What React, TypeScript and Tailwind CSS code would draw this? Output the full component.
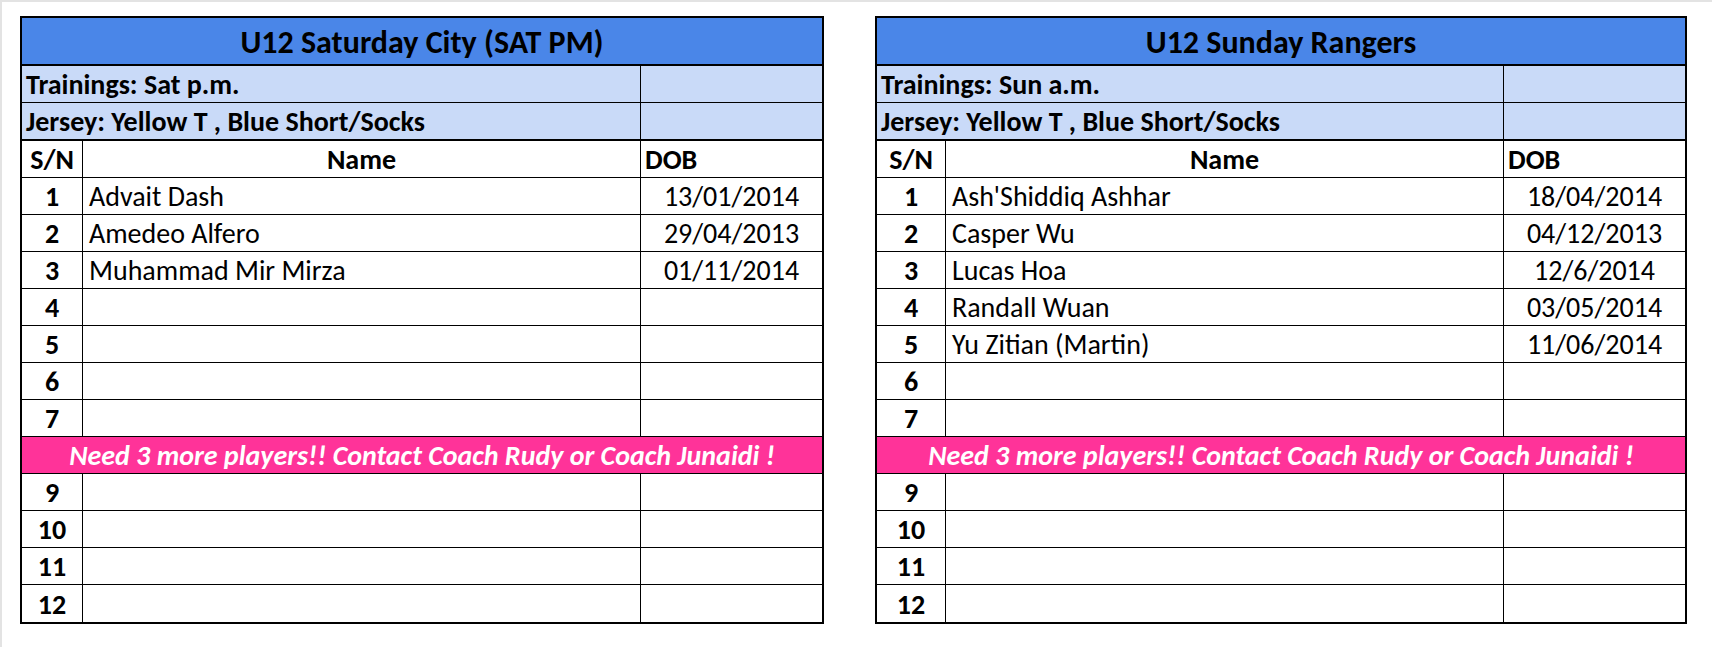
import React from "react";

type Team = {
  title: string;
  training: string;
  jersey: string;
  snW: string;
  mergedW: string;
  players: { name: string; dob: string }[];
};

const teams: Team[] = [
  {
    title: "U12 Saturday City (SAT PM)",
    training: "Trainings: Sat p.m.",
    jersey: "Jersey: Yellow T , Blue Short/Socks",
    snW: "w-[61px]",
    mergedW: "w-[619px]",
    players: [
      { name: "Advait Dash", dob: "13/01/2014" },
      { name: "Amedeo Alfero", dob: "29/04/2013" },
      { name: "Muhammad Mir Mirza", dob: "01/11/2014" },
    ],
  },
  {
    title: "U12 Sunday Rangers",
    training: "Trainings: Sun a.m.",
    jersey: "Jersey: Yellow T , Blue Short/Socks",
    snW: "w-[69px]",
    mergedW: "w-[627px]",
    players: [
      { name: "Ash'Shiddiq Ashhar", dob: "18/04/2014" },
      { name: "Casper Wu", dob: "04/12/2013" },
      { name: "Lucas Hoa", dob: "12/6/2014" },
      { name: "Randall Wuan", dob: "03/05/2014" },
      { name: "Yu Zitian (Martin)", dob: "11/06/2014" },
    ],
  },
];

function Row({ team, n, last }: { team: Team; n: number; last?: boolean }) {
  const p = team.players[n - 1];
  return (
    <div className={`flex h-[37px] ${last ? "" : "border-b border-black"}`}>
      <div className={`${team.snW} shrink-0 border-r border-black flex items-center justify-center pt-[2px] font-bold`}>
        {n}
      </div>
      <div className="w-[558px] shrink-0 border-r border-black flex items-center pt-[2px] pl-[6px]">
        {p?.name}
      </div>
      <div className="flex-1 flex items-center justify-center pt-[2px]">{p?.dob}</div>
    </div>
  );
}

function Roster({ team, width }: { team: Team; width: string }) {
  return (
    <div className={`${width} shrink-0 border-2 border-black text-[28px] leading-none text-black`}>
      <div className="h-[48px] border-b-2 border-black bg-[#4a86e8] flex items-center justify-center pt-[3px] text-[32px] font-bold">
        {team.title}
      </div>
      <div className="flex h-[37px] border-b border-black bg-[#c9daf8] font-bold">
        <div className={`${team.mergedW} shrink-0 border-r border-black flex items-center pt-[2px] pl-[4px]`}>
          {team.training}
        </div>
        <div className="flex-1" />
      </div>
      <div className="flex h-[38px] border-b-2 border-black bg-[#c9daf8] font-bold">
        <div className={`${team.mergedW} shrink-0 border-r border-black flex items-center pt-[2px] pl-[4px]`}>
          {team.jersey}
        </div>
        <div className="flex-1" />
      </div>
      <div className="flex h-[37px] border-b border-black font-bold">
        <div className={`${team.snW} shrink-0 border-r border-black flex items-center justify-center pt-[2px]`}>S/N</div>
        <div className="w-[558px] shrink-0 border-r border-black flex items-center justify-center pt-[2px]">Name</div>
        <div className="flex-1 flex items-center pt-[2px] pl-[4px]">DOB</div>
      </div>
      {[1, 2, 3, 4, 5, 6, 7].map((n) => (
        <Row key={n} team={team} n={n} />
      ))}
      <div className="h-[37px] border-b border-black bg-[#ff3399] flex items-center justify-center pt-[2px] text-white font-bold italic">
        Need 3 more players!! Contact Coach Rudy or Coach Junaidi !
      </div>
      {[9, 10, 11, 12].map((n) => (
        <Row key={n} team={team} n={n} last={n === 12} />
      ))}
    </div>
  );
}

export default function App() {
  return (
    <div
      className="w-[1712px] h-[647px] bg-white border-t-2 border-l-2 border-[#e3e3e3] pt-[14px] pl-[18px] flex items-start gap-[51px]"
      style={{ fontFamily: "Carlito, Calibri, Lato, sans-serif" }}
    >
      <Roster team={teams[0]} width="w-[804px]" />
      <Roster team={teams[1]} width="w-[812px]" />
    </div>
  );
}
